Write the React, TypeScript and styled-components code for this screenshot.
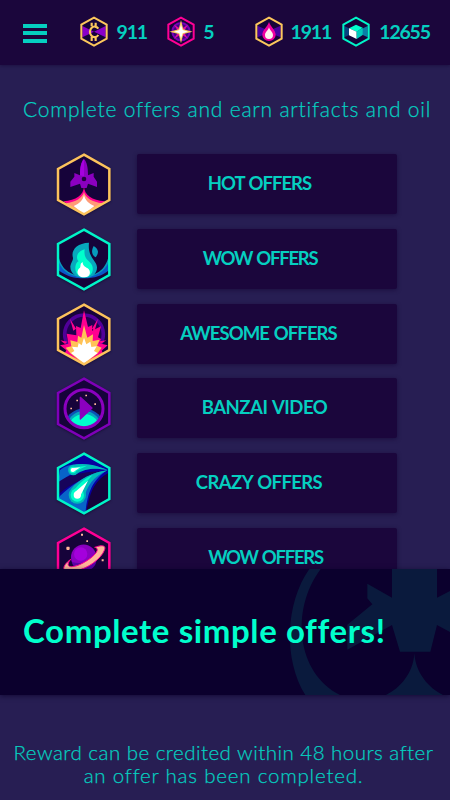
import { ReactNode } from "react";
import styled, { createGlobalStyle } from "styled-components";

const GlobalStyle = createGlobalStyle`
  * {
    box-sizing: border-box;
  }
  body {
    margin: 0;
    background: #271e53;
    font-family: Lato, "Liberation Sans", sans-serif;
    color: #05cfc0;
  }
`;

const PageStyle = styled.div`
  width: 450px;
  height: 800px;
  overflow: hidden;
  display: flex;
  flex-direction: column;
`;

const HeaderStyle = styled.header`
  height: 65px;
  flex: none;
  padding-left: 23px;
  display: grid;
  grid-template-columns: 56.6px 87.7px 87.3px 87.7px 1fr;
  align-items: center;
  background: #1b063c;
  box-shadow: 0 1px 3px rgba(20, 5, 50, 0.5);
`;

const BurgerStyle = styled.button`
  display: flex;
  flex-direction: column;
  gap: 3.5px;
  width: 24px;
  padding: 0;
  margin-top: 1px;
  border: none;
  background: none;
`;

const BurgerLineStyle = styled.span`
  height: 4px;
  background: #05cfc0;
`;

const StatStyle = styled.div`
  display: flex;
  align-items: center;
  height: 32px;
  margin-top: -2px;
`;

const StatIconStyle = styled.svg`
  width: 28px;
  height: 31.4px;
  flex: none;
`;

const StatValueStyle = styled.span<{ $gap: number }>`
  margin-left: ${({ $gap }) => $gap}px;
  font-size: 19.5px;
  line-height: 24px;
  font-weight: 700;
  letter-spacing: -1.2px;
`;

const TitleStyle = styled.h1`
  margin: 32px 0 0;
  padding-left: 23px;
  font-size: 21px;
  line-height: 24px;
  font-weight: 300;
  letter-spacing: 0.79px;
  white-space: nowrap;
  -webkit-text-stroke: 0.25px;
`;

const ListStyle = styled.div`
  height: 448px;
  flex: none;
  overflow: hidden;
  padding: 32px 53px 0 57px;
  display: flex;
  flex-direction: column;
  gap: 12px;
`;

const OfferStyle = styled.div`
  display: flex;
  flex: none;
  gap: 26px;
  height: 62.8px;
`;

const OfferIconStyle = styled.svg`
  width: 54px;
  height: 62.7px;
  flex: none;
  overflow: visible;
  filter: drop-shadow(0 1px 1px rgba(15, 5, 40, 0.6));
`;

const OfferButtonStyle = styled.button<{ $shift: number; $spacing: number }>`
  width: 260px;
  height: 60px;
  margin-top: 1px;
  padding: 0 ${({ $shift }) => $shift * 2}px 2px 0;
  border: none;
  border-radius: 2px;
  background: #1b063c;
  box-shadow: 0 1px 4px rgba(20, 5, 50, 0.6);
  color: inherit;
  font-family: inherit;
  font-size: 18.5px;
  font-weight: 700;
  letter-spacing: ${({ $spacing }) => $spacing}px;
  word-spacing: 1px;
  white-space: nowrap;
`;

const BannerStyle = styled.section`
  position: relative;
  height: 126px;
  flex: none;
  display: flex;
  align-items: center;
  padding-left: 23px;
  background: #0b002d;
  box-shadow: 0 1px 5px rgba(10, 0, 40, 0.7);
`;

const BannerArtStyle = styled.svg`
  position: absolute;
  top: 0;
  right: 0;
  width: 180px;
  height: 126px;
  fill: #0a1a3d;
`;

const BannerTextStyle = styled.h2`
  position: relative;
  margin: 0 0 5px;
  color: #00ffcc;
  font-size: 33px;
  line-height: 40px;
  font-weight: 700;
  letter-spacing: 0.6px;
  white-space: nowrap;
`;

const NoteStyle = styled.p`
  margin: 46px 0 0;
  padding-right: 3px;
  text-align: center;
  font-size: 20.5px;
  line-height: 23px;
  font-weight: 300;
  white-space: nowrap;
  -webkit-text-stroke: 0.25px;
`;

const NoteLineStyle = styled.span<{ $spacing: number }>`
  display: block;
  letter-spacing: ${({ $spacing }) => $spacing}px;
`;

type THex = {
  color: string;
  children: ReactNode;
};

const SMALL_HEX = "0,-42 38,-21 38,21 0,42 -38,21 -38,-21";
const HEX = "117,27 193,70 193,163 117,206 39,163 39,70";

const SmallHex = ({ color, children }: THex) => (
  <StatIconStyle viewBox="-42 -47 84 94">
    <polygon points={SMALL_HEX} fill="#16033a" />
    {children}
    <polygon points={SMALL_HEX} fill="none" stroke={color} strokeWidth="6" />
  </StatIconStyle>
);

const OfferHex = ({ id, color, children }: THex & { id: string }) => (
  <OfferIconStyle viewBox="36 22 162 188">
    <clipPath id={id}>
      <polygon points={HEX} />
    </clipPath>
    <polygon points={HEX} fill="#16033a" />
    <g clipPath={`url(#${id})`}>{children}</g>
    <polygon points={HEX} fill="none" stroke={color} strokeWidth="7.5" />
  </OfferIconStyle>
);

//===========Header icons============//
const CoinIcon = () => (
  <SmallHex color="#fcc75c">
    <path d="M-35 -17 L0 0 L-35 17Z M35 -17 L0 0 L35 17Z" fill="#8a00c8" />
    <path
      d="M13 -9 A14 16 0 1 0 13 10 M-7 -27 V-16 M5 -27 V-16 M-7 16 V28 M5 16 V28"
      fill="none"
      stroke="#fcc75c"
      strokeWidth="6.5"
    />
  </SmallHex>
);

const StarIcon = () => (
  <SmallHex color="#ff0095">
    <circle r="26" fill="#3f0580" stroke="#7a00b8" strokeWidth="6" />
    <path d="M-21 -21 L0 -8 L21 -21 L8 0 L21 21 L0 8 L-21 21 L-8 0Z" fill="#e0109c" />
    <path d="M0 -35 L7 -7 L35 0 L7 7 L0 35 L-7 7 L-35 0 L-7 -7Z" fill="#fcc75c" />
    <path d="M0 -21 L5 -5 L21 0 L5 5 L0 21 L-5 5 L-21 0 L-5 -5Z" fill="#fff" />
  </SmallHex>
);

const OilIcon = () => (
  <SmallHex color="#fcc75c">
    <path d="M-35 -18 L0 -3 L35 -18 V17 L0 3 L-35 17Z" fill="#4a00a0" />
    <path d="M0 -29 C5 -13 20 -6 20 10 A20 18 0 0 1 -20 10 C-20 -6 -5 -13 0 -29Z" fill="#f000a0" />
    <path d="M0 -13 C3 -3 12 2 12 10 A12 12 0 0 1 -12 10 C-12 2 -3 -3 0 -13Z" fill="#fff0ee" />
  </SmallHex>
);

const CubeIcon = () => (
  <SmallHex color="#00f5c8">
    <path d="M-35 -17 L0 0 L-35 17Z" fill="#064580" />
    <path d="M35 -17 L0 0 L35 17Z" fill="#087fa8" />
    <path d="M-21 -10 L0 -21 L20 -12 L2 0Z" fill="#00ffcc" />
    <path d="M-21 -10 L2 0 V22 L-21 11Z" fill="#fff" />
    <path d="M2 0 L20 -12 V10 L2 22Z" fill="#00cbbb" />
  </SmallHex>
);

//===========Offer icons============//
const RocketIcon = () => (
  <OfferHex id="rocket" color="#fcc35c">
    <path d="M117 123 C115 148 94 164 55 167 L117 206 L180 167 C140 164 119 148 117 123Z" fill="#ff0090" />
    <path d="M117 139 C112 157 93 169 62 173 L117 206 L172 173 C142 169 121 157 117 139Z" fill="#ff9a78" />
    <path d="M117 148 C114 163 104 174 86 181 L117 206 L148 181 C131 174 120 163 117 148Z" fill="#fff" />
    <path
      d="M117 40 C108 50 105 65 105 89 L88 82 V93 L76 108 V124 L105 114 L109 127 H125 L129 114 L156 124 V108 L146 93 V82 L129 89 C129 65 126 50 117 40Z"
      fill="#8b00bf"
    />
    <path d="M117 40 C108 50 105 65 105 89 L117 92Z" fill="#a600df" />
    <circle cx="117" cy="100" r="7" fill="#21003f" />
  </OfferHex>
);

const FlameIcon = () => (
  <OfferHex id="flame" color="#00f5c8">
    <path d="M39 96 C45 145 75 165 117 165 C158 165 185 145 193 96 V168 L117 206 L39 168Z" fill="#0796bb" />
    <path d="M39 120 C54 158 84 169 117 169 C149 169 180 155 193 120 V172 L117 206 L39 172Z" fill="#0857c8" />
    <path d="M39 148 C66 168 88 173 117 173 C149 173 172 165 193 148 V168 L117 206 L39 168Z" fill="#16033a" />
    <path
      d="M132 66 C94 67 77 90 84 112 C84 120 79 124 76 137 C75 158 94 172 117 172 C142 172 157 158 156 139 C155 119 127 111 132 66Z"
      fill="#07a9bd"
    />
    <path d="M119 86 C91 93 94 117 101 122 C88 124 83 170 117 170 C143 170 149 144 139 130 C132 120 115 115 119 86Z" fill="#00ffcc" />
    <path d="M113 124 C104 129 108 136 105 141 C91 151 97 170 118 170 C139 170 138 149 128 143 C119 137 113 135 113 124Z" fill="#fff" />
    <path d="M146 76 C138 91 140 102 152 110 C162 97 162 86 146 76Z" fill="#079bbd" />
  </OfferHex>
);

const BlastIcon = () => (
  <OfferHex id="blast" color="#fcc35c">
    <circle cx="117" cy="116" r="58" fill="#210052" stroke="#500099" strokeWidth="11" />
    <path d="M75 69 L93 99 L85 105Z M159 69 L149 105 L141 99Z M46 134 L67 138 L60 145Z M184 134 L167 145 L164 137Z" fill="#ff0090" />
    <path
      d="M117 44 L129 94 L142 88 L141 105 L168 92 L159 125 L168 130 L163 143 L188 149 L170 165 L174 173 L117 206 L59 173 L64 164 L45 149 L70 144 L65 114 L94 119 L93 91 L107 97Z"
      fill="#ff0090"
    />
    <path
      d="M117 88 L127 126 L144 116 L143 136 L164 132 L156 150 L170 156 L158 173 L117 206 L76 173 L62 156 L79 152 L76 134 L97 139 L99 120 L109 126Z"
      fill="#ffc357"
    />
    <path
      d="M117 126 L124 146 L136 138 L139 154 L155 152 L147 166 L158 172 L117 203 L78 172 L88 166 L81 153 L98 155 L101 142 L110 149Z"
      fill="#fff"
    />
  </OfferHex>
);

const VideoIcon = () => (
  <OfferHex id="video" color="#7f00b8">
    <clipPath id="planet">
      <circle cx="117" cy="117" r="54" />
    </clipPath>
    <circle cx="117" cy="117" r="56" fill="#16033a" />
    <g clipPath="url(#planet)">
      <circle cx="117" cy="177" r="61" fill="#0b52b5" />
      <circle cx="117" cy="177" r="53" fill="#07a6bd" />
      <circle cx="117" cy="182" r="49" fill="#00ffcc" />
    </g>
    <path d="M121 75h5v5h-5z M94 90h5v5h-5z M76 114h5v5h-5z M148 101h5v5h-5z" fill="#ffb69a" />
    <circle cx="117" cy="117" r="57" fill="none" stroke="#8b00bf" strokeWidth="9" />
    <path d="M106 83 L141 115 L106 148Z" fill="#8b00bf" stroke="#8b00bf" strokeWidth="4" strokeLinejoin="round" />
  </OfferHex>
);

const CometIcon = () => (
  <OfferHex id="comet" color="#00f5c8">
    <path d="M39 70 L117 27 L190 69 V85 C155 105 136 130 124 202 L117 206 L39 163Z" fill="#0800a0" />
    <path d="M39 105 C80 92 120 77 188 80 C135 95 78 113 39 151Z" fill="#17045b" />
    <path d="M45 77 C70 53 124 51 188 76 C126 65 90 77 39 113Z" fill="#0864c9" />
    <path d="M45 154 C78 124 127 84 188 76 C142 105 128 145 122 198 L117 206 L39 163Z" fill="#0864c9" />
    <path d="M84 61 C125 53 157 64 188 76 C151 70 127 68 88 91Z" fill="#00bbb9" />
    <path d="M79 132 C104 103 142 83 188 77 C145 97 127 119 116 166Z" fill="#00bbb9" />
    <circle cx="85" cy="76" r="16" fill="#00bbb9" />
    <circle cx="97" cy="151" r="26" fill="#00bbb9" />
    <circle cx="97" cy="151" r="20" fill="#00ffcc" />
    <circle cx="84" cy="76" r="10" fill="#00ffcc" />
    <path d="M86 138 C103 116 121 100 143 91 C124 109 117 124 107 156Z M81 69 L126 63 L87 82Z" fill="#00ffcc" />
    <path d="M91 141 L129 108 L106 153Z M80 71 L106 68 L86 81Z" fill="#fff" />
    <circle cx="97" cy="151" r="11" fill="#fff" />
    <circle cx="83" cy="76" r="6" fill="#fff" />
  </OfferHex>
);

const PlanetIcon = () => (
  <OfferHex id="saturn" color="#ff0095">
    <path d="M108 42h6v6h-6z M124 62h5v5h-5z M65 81h8v10h-8z M64 83h10v6h-10z M170 119h6v6h-6z" fill="#ffb69a" />
    <circle cx="117" cy="117" r="38" fill="#5c00a5" />
    <path d="M81 127 A37 37 0 0 1 151 98 C142 122 116 137 81 127Z" fill="#8900bf" />
    <circle cx="107" cy="103" r="20" fill="#a400dc" />
    <path
      d="M149 83 C174 74 184 78 178 92 C169 116 128 149 88 154 C48 160 48 141 77 119 C62 137 69 147 99 137 C138 121 173 88 149 83Z"
      fill="#ffb69a"
      stroke="#ff0090"
      strokeWidth="3"
    />
  </OfferHex>
);

type TOffer = {
  name: string;
  icon: ReactNode;
  shift: number;
  spacing: number;
};

const offers: TOffer[] = [
  { name: "HOT OFFERS", icon: <RocketIcon />, shift: 7.5, spacing: -1 },
  { name: "WOW OFFERS", icon: <FlameIcon />, shift: 7, spacing: -1.25 },
  { name: "AWESOME OFFERS", icon: <BlastIcon />, shift: 8.5, spacing: -0.9 },
  { name: "BANZAI VIDEO", icon: <VideoIcon />, shift: 2.5, spacing: -0.45 },
  { name: "CRAZY OFFERS", icon: <CometIcon />, shift: 8, spacing: -0.6 },
  { name: "WOW OFFERS", icon: <PlanetIcon />, shift: 1.5, spacing: -1.25 },
];

const stats = [
  { value: "911", icon: <CoinIcon />, gap: 9 },
  { value: "5", icon: <StarIcon />, gap: 8 },
  { value: "1911", icon: <OilIcon />, gap: 8 },
  { value: "12655", icon: <CubeIcon />, gap: 9 },
];

export default function App() {
  return (
    <PageStyle>
      <GlobalStyle />
      <HeaderStyle>
        <BurgerStyle aria-label="menu">
          <BurgerLineStyle />
          <BurgerLineStyle />
          <BurgerLineStyle />
        </BurgerStyle>
        {stats.map(el => (
          <StatStyle key={el.value}>
            {el.icon}
            <StatValueStyle $gap={el.gap}>{el.value}</StatValueStyle>
          </StatStyle>
        ))}
      </HeaderStyle>

      <TitleStyle>Complete offers and earn artifacts and oil</TitleStyle>

      <ListStyle>
        {offers.map((el, i) => (
          <OfferStyle key={i}>
            {el.icon}
            <OfferButtonStyle $shift={el.shift} $spacing={el.spacing}>
              {el.name}
            </OfferButtonStyle>
          </OfferStyle>
        ))}
      </ListStyle>

      <BannerStyle>
        <BannerArtStyle viewBox="0 27 540 378">
          <path d="M118 27 C45 130 40 300 106 405 H210 C80 340 60 150 152 27Z" />
          <path d="M366 27 H501 V113 L540 93 V216 L501 195 L481 275 H390 L366 195 L232 269 V194 L307 133 L292 115 V71 L366 113Z" />
          <path d="M433 280 C430 340 390 385 348 405 H519 C477 385 437 340 433 280Z" />
        </BannerArtStyle>
        <BannerTextStyle>Complete simple offers!</BannerTextStyle>
      </BannerStyle>

      <NoteStyle>
        <NoteLineStyle $spacing={0.48}>Reward can be credited within 48 hours after</NoteLineStyle>
        <NoteLineStyle $spacing={0.8}>an offer has been completed.</NoteLineStyle>
      </NoteStyle>
    </PageStyle>
  );
}
